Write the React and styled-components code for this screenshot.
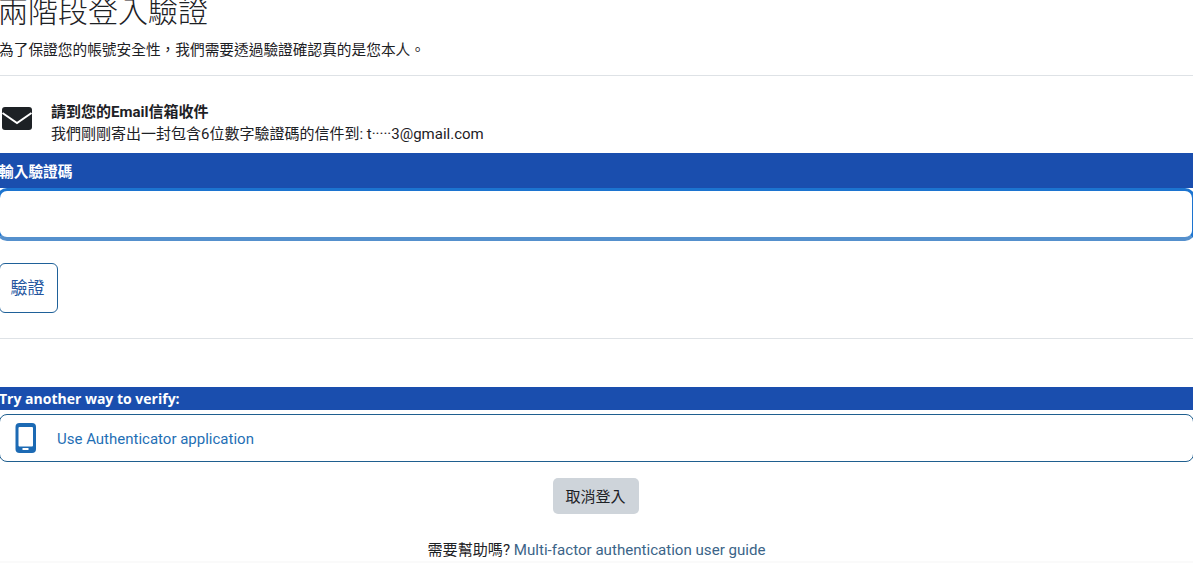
import React from "react";
import styled, { createGlobalStyle } from "styled-components";

const GlobalStyle = createGlobalStyle`
  html, body {
    margin: 0;
    padding: 0;
    height: 563px;
    overflow: hidden;
    background: #fff;
    font-family: Roboto, "Noto Sans CJK TC", sans-serif;
    font-size: 15px;
    color: #1d2125;
  }
`;

const Page = styled.div`
  width: 1193px;
  height: 563px;
  overflow: hidden;
  display: flex;
  flex-direction: column;
`;

const Title = styled.h1`
  margin: -10px 0 0 -2px;
  font-size: 30px;
  line-height: 44px;
  font-weight: 300;
  color: #1d2125;
`;

const Lead = styled.p`
  margin: 0 0 0 -1px;
  font-size: 14.7px;
  line-height: 22px;
  height: 41px;
  padding-top: 5px;
  box-sizing: border-box;
`;

const Rule = styled.hr`
  width: 100%;
  margin: 0;
  border: 0;
  border-top: 1px solid #dee2e6;
`;

const Notice = styled.div`
  display: flex;
  align-items: flex-start;
  gap: 18px;
  height: 77px;
  padding: 25px 0 0 1px;
  box-sizing: border-box;
`;

const MailSlot = styled.div`
  padding-top: 6px;
`;

const NoticeText = styled.div`
  display: flex;
  flex-direction: column;
  line-height: 22px;
`;

const NoticeTitle = styled.strong`
  font-weight: 700;
`;

const Band = styled.label`
  display: block;
  background: #1a4eae;
  color: #fff;
  font-weight: 700;
`;

const CodeBand = styled(Band)`
  height: 35px;
  line-height: 39px;
  font-size: 14.7px;
  text-indent: -1px;
`;

const CodeInput = styled.input`
  display: block;
  width: 1198px;
  height: 53px;
  margin-left: -3px;
  box-sizing: border-box;
  border: 3px solid #1c74d0;
  border-bottom: 4px solid #5590cd;
  border-radius: 10px;
  background: #fff;
  outline: none;
`;

const VerifyButton = styled.button`
  align-self: flex-start;
  width: 59px;
  height: 50px;
  margin: 22px 0 25px -1px;
  padding: 0 2px 3px 0;
  background: #fff;
  border: 1px solid #1f6199;
  border-radius: 6px;
  color: #23559e;
  font: inherit;
  font-size: 17px;
`;

const AltBand = styled(Band)`
  height: 23px;
  line-height: 23px;
  margin-top: 48px;
  margin-bottom: 4px;
  font-family: "Open Sans", "Noto Sans CJK TC", sans-serif;
  font-size: 14px;
  text-indent: -1px;
`;

const AltOption = styled.a`
  display: flex;
  align-items: center;
  gap: 20px;
  width: 1195px;
  height: 48px;
  box-sizing: border-box;
  padding-left: 15px;
  border: 1px solid #1f5f8f;
  border-radius: 8px;
  margin-left: -1px;
  color: #1f6fb5;
  text-decoration: none;
`;

const AltLabel = styled.span`
  padding-top: 2px;
`;

const CancelRow = styled.div`
  display: flex;
  justify-content: center;
  margin-top: 16px;
  padding-right: 2px;
`;

const CancelButton = styled.button`
  width: 86px;
  height: 36px;
  padding: 0 0 2px;
  background: #ced4da;
  border: 0;
  border-radius: 5px;
  color: #1d2125;
  font: inherit;
`;

const Help = styled.div`
  text-align: center;
  margin-top: 26px;
  line-height: 20px;
  font-size: 15.1px;
`;

const HelpLink = styled.a`
  color: #3b6488;
  text-decoration: none;
`;

const FooterEdge = styled.div`
  margin-top: auto;
  height: 2px;
  background: #fafafa;
`;

const MailIcon = () => (
  <svg width="32" height="24" viewBox="0 0 32 24" aria-hidden="true" display="block">
    <rect x="1" width="30" height="23" rx="3" fill="#1d2125" />
    <path d="M1.5 6 L16 16 L30.5 6" fill="none" stroke="#fff" strokeWidth="2" />
  </svg>
);

const PhoneIcon = () => (
  <svg width="22" height="30" viewBox="0 0 22 30" aria-hidden="true">
    <rect x="0.5" width="20.5" height="30" rx="4" fill="#1c6ab4" />
    <rect x="3.5" y="4" width="14.5" height="19.5" rx="1" fill="#fff" />
    <rect x="7.5" y="25" width="6" height="2" fill="#fff" />
  </svg>
);

export default function App() {
  return (
    <Page>
      <GlobalStyle />
      <Title>兩階段登入驗證</Title>
      <Lead>為了保證您的帳號安全性，我們需要透過驗證確認真的是您本人。</Lead>
      <Rule />
      <Notice>
        <MailSlot>
          <MailIcon />
        </MailSlot>
        <NoticeText>
          <NoticeTitle>請到您的Email信箱收件</NoticeTitle>
          <span>我們剛剛寄出一封包含6位數字驗證碼的信件到: t·····3@gmail.com</span>
        </NoticeText>
      </Notice>
      <CodeBand htmlFor="code">輸入驗證碼</CodeBand>
      <CodeInput id="code" />
      <VerifyButton>驗證</VerifyButton>
      <Rule />
      <AltBand>Try another way to verify:</AltBand>
      <AltOption href="#">
        <PhoneIcon />
        <AltLabel>Use Authenticator application</AltLabel>
      </AltOption>
      <CancelRow>
        <CancelButton>取消登入</CancelButton>
      </CancelRow>
      <Help>
        需要幫助嗎? <HelpLink href="#">Multi-factor authentication user guide</HelpLink>
      </Help>
      <FooterEdge />
    </Page>
  );
}
